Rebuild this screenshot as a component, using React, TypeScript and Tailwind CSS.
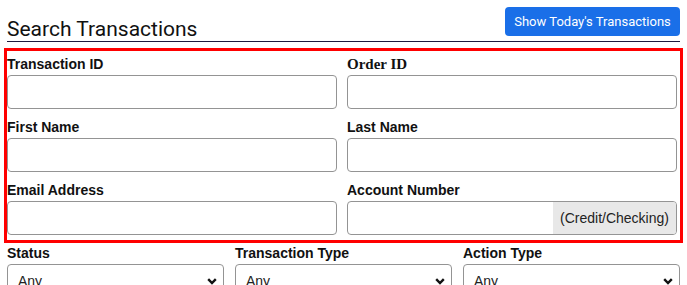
import React from 'react';

// ─── Small form pieces ────────────────────────────────────────────────────────

const labelCls =
  "block text-[14px] leading-[18px] font-bold text-[#111] mb-[2px] font-['Liberation_Sans',sans-serif]";

const serifLabelCls =
  "block text-[15px] leading-[18px] font-bold text-[#111] mb-[2px] font-['Liberation_Serif',serif]";

const inputCls =
  'block w-full h-[34px] rounded-[4px] border border-[#949494] bg-white px-[10px] text-[14px] outline-none';

const Field: React.FC<{ label: string; serif?: boolean; children?: React.ReactNode }> = ({
  label,
  serif = false,
  children,
}) => (
  <div className="flex flex-col">
    <label className={serif ? serifLabelCls : labelCls}>{label}</label>
    {children ?? <input type="text" className={inputCls} />}
  </div>
);

const Chevron = () => (
  <svg width="10" height="7" viewBox="0 0 10 7" className="shrink-0">
    <path d="M1.2 1.2 L5 5 L8.8 1.2" fill="none" stroke="#111" strokeWidth="2.4" />
  </svg>
);

const SelectBox: React.FC<{ label: string }> = ({ label }) => (
  <Field label={label}>
    <div className="flex h-[34px] items-center justify-between rounded-[4px] border border-[#949494] bg-white pl-[10px] pr-[6px] text-[14px] text-[#222] font-['Liberation_Sans',sans-serif]">
      <span>Any</span>
      <Chevron />
    </div>
  </Field>
);

// ─── Page ─────────────────────────────────────────────────────────────────────

export default function App() {
  return (
    <div className="w-[687px] h-[285px] overflow-hidden bg-white">
      {/* header */}
      <div className="mx-[7px] flex items-end justify-between border-b border-[#1e1a3d] pt-[7px]">
        <h1 className="text-[21px] leading-[24px] font-normal text-[#111] font-['Roboto',sans-serif]">
          Search Transactions
        </h1>
        <button className="mb-[5px] h-[29px] w-[175px] rounded-[4px] bg-[#1a6fe8] text-[13px] text-white font-['Roboto',sans-serif]">
          Show Today's Transactions
        </button>
      </div>

      {/* highlighted block */}
      <div className="mt-[6px] ml-[4px] w-[679px] border-[3px] border-[#ff0000] pt-[4px] pb-[5px] pr-[3px]">
        <div className="grid grid-cols-2 gap-x-[10px] gap-y-[9px]">
          <Field label="Transaction ID" />
          <Field label="Order ID" serif />
          <Field label="First Name" />
          <Field label="Last Name" />
          <Field label="Email Address" />
          <Field label="Account Number">
            <div className="flex h-[34px] overflow-hidden rounded-[4px] border border-[#949494] bg-white">
              <input type="text" className="min-w-0 flex-1 px-[10px] text-[14px] outline-none" />
              <span className="flex w-[123px] items-center justify-center bg-[#e8e8e8] text-[14px] text-[#222] font-['Liberation_Sans',sans-serif]">
                (Credit/Checking)
              </span>
            </div>
          </Field>
        </div>
      </div>

      {/* filter selects */}
      <div className="mx-[7px] mt-[1px] grid grid-cols-3 gap-x-[11px]">
        <SelectBox label="Status" />
        <SelectBox label="Transaction Type" />
        <SelectBox label="Action Type" />
      </div>
    </div>
  );
}
